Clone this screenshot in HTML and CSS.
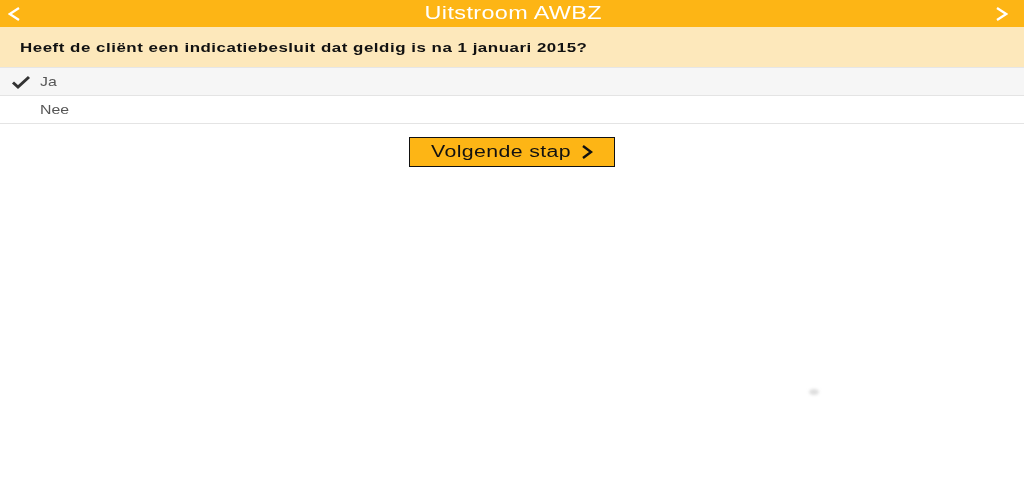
FILE: index.html
```html
<!DOCTYPE html>
<html>
<head>
<meta charset="utf-8">
<link rel="stylesheet" href="styles.css">
</head>
<body>
<header class="topbar">
  <svg class="nav nav-left" width="12" height="14" viewBox="0 0 12 14"><path d="M11 1 L1.8 7 L11 13" fill="none" stroke="#fff" stroke-width="2.3"/></svg>
  <h1 class="title"><span class="wide wide-center">Uitstroom AWBZ</span></h1>
  <svg class="nav nav-right" width="12" height="14" viewBox="0 0 12 14"><path d="M1 1 L10.2 7 L1 13" fill="none" stroke="#fff" stroke-width="2.3"/></svg>
</header>
<div class="question"><span class="wide">Heeft de cliënt een indicatiebesluit dat geldig is na 1 januari 2015?</span></div>
<ul class="options">
  <li class="option selected">
    <svg class="check" width="20" height="16" viewBox="0 0 20 16"><path d="M2 8.5 L7 13 L18 3" fill="none" stroke="#333" stroke-width="3"/></svg>
    <span class="wide">Ja</span>
  </li>
  <li class="option"><span class="wide">Nee</span></li>
</ul>
<div class="actions">
  <button class="next"><span class="wide">Volgende stap</span>
    <svg width="14" height="16" viewBox="0 0 14 16"><path d="M3 2 L11 8 L3 14" fill="none" stroke="#111" stroke-width="2.4"/></svg>
  </button>
</div>
<div class="smudge"></div>
</body>
</html>
```
FILE: styles.css
```css
* { box-sizing: border-box; }
body {
  margin: 0;
  font-family: "Liberation Sans", Arial, sans-serif;
  background: #fff;
  position: relative;
  min-height: 500px;
}
.wide {
  display: inline-block;
  transform: scaleX(1.3);
  transform-origin: left center;
  white-space: nowrap;
}
.wide-center { transform-origin: center; transform: scaleX(1.3); }
.topbar {
  height: 27px;
  background: #fdb515;
  display: grid;
  grid-template-columns: 1fr auto 1fr;
  align-items: center;
  padding: 0 16px 0 8px;
}
.nav-left { justify-self: start; }
.nav-right { justify-self: end; }
.title {
  margin: 0 0 0 10px;
  font-size: 18px;
  font-weight: normal;
  color: #fff;
  letter-spacing: 0.3px;
  line-height: 27px;
}
.nav { display: block; }
.question {
  height: 41px;
  background: #fde8bb;
  border-bottom: 1px solid #e6e6e6;
  display: flex;
  align-items: center;
  padding-left: 20px;
  font-size: 13px;
  font-weight: bold;
  color: #111;
  letter-spacing: 0.4px;
}
.options {
  list-style: none;
  margin: 0;
  padding: 0;
}
.option {
  height: 28px;
  border-bottom: 1px solid #e4e4e4;
  display: flex;
  align-items: center;
  padding-left: 40px;
  position: relative;
  font-size: 13px;
  color: #555;
}
.option .wide { transform: scaleX(1.22); }
.option.selected { background: #f6f6f6; }
.check {
  position: absolute;
  left: 11px;
  top: 6px;
}
.actions {
  display: flex;
  justify-content: center;
  padding-top: 13px;
}
.next {
  width: 206px;
  height: 30px;
  background: #fdb515;
  border: 1px solid #111;
  font-family: "Liberation Sans", Arial, sans-serif;
  font-size: 16px;
  letter-spacing: 0.3px;
  color: #111;
  display: flex;
  align-items: center;
  padding: 0 0 0 21px;
}
.next .wide { transform: scaleX(1.33); }
.next svg { display: block; margin-left: 44px; }
.smudge {
  position: absolute;
  left: 809px;
  top: 389px;
  width: 10px;
  height: 6px;
  border-radius: 50%;
  background: #ddd;
  filter: blur(1.5px);
}
```
